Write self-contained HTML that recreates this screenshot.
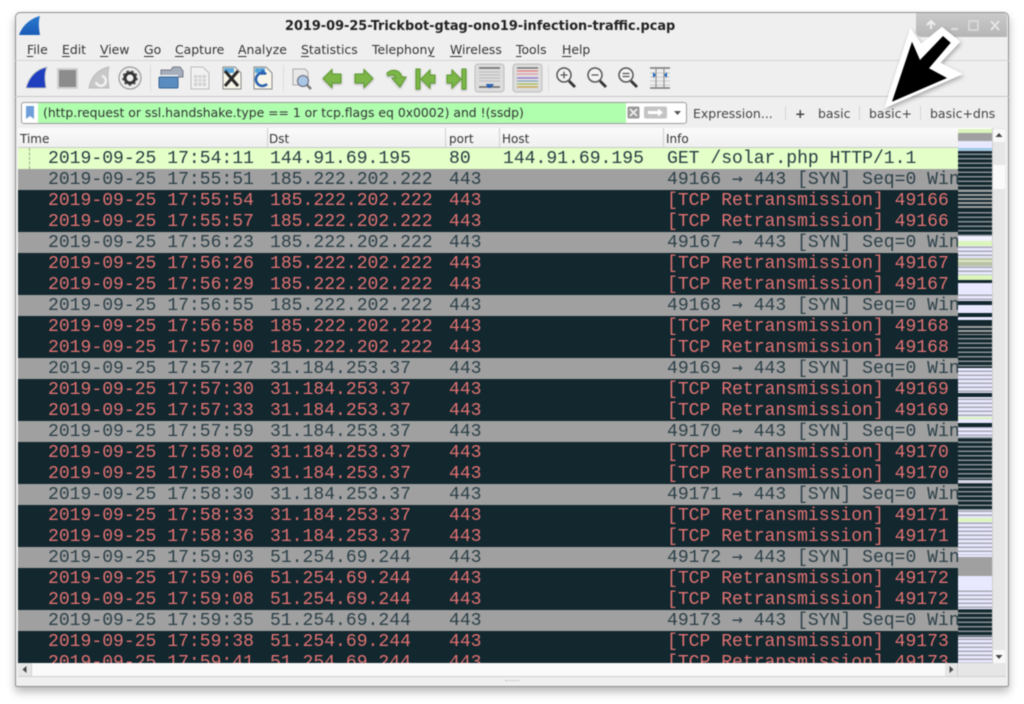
<!DOCTYPE html>
<html><head><meta charset="utf-8"><title>Wireshark</title>
<style>
html,body{margin:0;padding:0;background:#fff;}
body{width:1024px;height:704px;overflow:hidden;position:relative;font-family:"DejaVu Sans","Liberation Sans",sans-serif;}
#wrap{position:absolute;left:0;top:0;width:1024px;height:704px;filter:blur(.45px);}
#win{position:absolute;left:15px;top:12px;width:992px;height:673px;background:#efefef;border:1px solid #8f8f8f;border-radius:5px 5px 2px 2px;box-shadow:0 5px 9px rgba(0,0,0,.28);}
.a{position:absolute;white-space:pre;}
.menu{font-size:12.4px;color:#333;top:42px;line-height:16px;}
.menu u{text-decoration-thickness:1px;text-underline-offset:2px;}
.hl{position:absolute;left:15px;width:994px;height:1px;background:#d4d4d4;}
.hd{position:absolute;top:131px;font-size:12px;color:#333;line-height:16px;}
.sep{position:absolute;top:128px;width:1px;height:20px;background:#cfcfcf;}
#rows{position:absolute;left:18px;top:148px;width:940px;height:515px;overflow:hidden;font-family:"Liberation Mono","DejaVu Sans Mono",monospace;font-size:18.07px;}
.r{position:relative;height:21px;line-height:21px;white-space:pre;}
.r span{position:absolute;top:1px;}
.r b{font-family:"DejaVu Sans Mono",monospace;font-weight:normal;font-size:17.98px;line-height:10px;}
.s1{left:30px}.s2{left:252px}.s3{left:431px}.s4{left:485px}.s5{left:649px}
.d{background:#12272e;color:#e27272;}
.g{background:#a0a0a0;color:#2c4048;}
.l{background:#e4ffc7;color:#263c44;}
.fb{font-size:12.5px;color:#444;top:106px;line-height:16px;}
</style></head><body>
<div id="wrap">
<div id="win"></div>
<div class="a" style="left:916px;top:13px;width:91px;height:24px;background:linear-gradient(#cacaca,#b6b6b6);border-radius:0 4px 0 6px;"></div>

<svg class="a" style="left:916px;top:13px" width="91" height="24">
<path d="M11 12l4-4 4 4M15 9v7" stroke="#eee" stroke-width="2" fill="none"/>
<rect x="35" y="15" width="7" height="2" fill="#ddd"/>
<rect x="53" y="8" width="9" height="9" fill="none" stroke="#dcdcdc" stroke-width="1.6"/>
<path d="M75 8l8 9M83 8l-8 9" stroke="#e6e6e6" stroke-width="2"/>
</svg>

<svg class="a" style="left:19px;top:15px" width="22" height="22"><defs><linearGradient id="fin" x1="0" y1="0" x2="0" y2="1"><stop offset="0" stop-color="#2a78cc"/><stop offset="1" stop-color="#1a5cb8"/></linearGradient></defs><path d="M21 1C13 3 4 9 0 20h21c-1-6-2-13 0-19z" fill="url(#fin)"/></svg>
<div class="a" style="left:285px;top:19px;font-weight:bold;font-size:12.87px;line-height:16px;color:#222;">2019-09-25-Trickbot-gtag-ono19-infection-traffic.pcap</div>

<div class="a menu" style="left:27px"><u>F</u>ile</div>
<div class="a menu" style="left:62px"><u>E</u>dit</div>
<div class="a menu" style="left:100px"><u>V</u>iew</div>
<div class="a menu" style="left:144px"><u>G</u>o</div>
<div class="a menu" style="left:175px"><u>C</u>apture</div>
<div class="a menu" style="left:238px"><u>A</u>nalyze</div>
<div class="a menu" style="left:301px"><u>S</u>tatistics</div>
<div class="a menu" style="left:372px">Telephon<u>y</u></div>
<div class="a menu" style="left:450px"><u>W</u>ireless</div>
<div class="a menu" style="left:516px"><u>T</u>ools</div>
<div class="a menu" style="left:562px"><u>H</u>elp</div>

<div class="hl" style="top:60px"></div>
<div class="hl" style="top:96px;background:#c8c8c8"></div>

<svg class="a" style="left:0;top:60px" width="700" height="36">
<path d="M47 7C37 9 29 16 26 28h20c-1-7-2-14 1-21z" fill="#1f3fbe" stroke="#c4c4c4" stroke-width="1"/>
<rect x="58" y="9" width="19" height="19" fill="#8c8c8c" stroke="#d0d0d0" stroke-width="2"/>
<path d="M109 7c-10 2-18 9-20 21h20c-1-7-2-14 0-21z" fill="#c8c8c8" stroke="#bbb"/>
<path d="M96 22a5 5 0 1 0 6-6" stroke="#f2f2f2" stroke-width="2.500" fill="none"/>
<circle cx="130" cy="18" r="11" fill="#eee" stroke="#999" stroke-width="1.200"/>
<circle cx="130" cy="18" r="5" fill="none" stroke="#333" stroke-width="3"/>
<circle cx="130" cy="18" r="7.200" fill="none" stroke="#444" stroke-width="1.200" stroke-dasharray="2.500 2.500"/>
<rect x="150" y="5" width="1" height="26" fill="#ddd"/>
<path d="M161 10h10l2-3h7l3 4v6h-22z" fill="#a4afbb" stroke="#778"/>
<rect x="160" y="15" width="18" height="2" fill="#f4f4f4"/>
<rect x="159" y="17" width="19" height="11" rx="1" fill="#5a8cc0" stroke="#35628f"/>
<path d="M191 7h12l6 6v16h-18z" fill="#f1f1f1" stroke="#bcbcbc"/>
<path d="M194 15h12v11h-12z" fill="#d2d2d2"/>
<path d="M194 18.500h12M194 22h12M198 15v11M202 15v11" stroke="#f1f1f1"/>
<path d="M223 7h12l6 6v16h-18z" fill="#f8f6e8" stroke="#888"/>
<path d="M224 8h10v5h-10z" fill="#58a6dc"/>
<path d="M225 11l13 15M238 11l-13 15" stroke="#2a2a2a" stroke-width="3"/>
<path d="M254 7h12l6 6v16h-18z" fill="#f8f6e8" stroke="#888"/>
<path d="M255 8h10v5h-10z" fill="#58a6dc"/>
<path d="M267 24a6.500 6.500 0 1 1-1-10" stroke="#2b62b0" stroke-width="2.600" fill="none"/>
<path d="M262 9l5 5-6 1z" fill="#2b62b0"/>
<rect x="283" y="5" width="1" height="26" fill="#ddd"/>
<path d="M293 9h12l3 3v13h-15z" fill="#e8e8e8" stroke="#aaa"/>
<circle cx="303" cy="21" r="5.500" fill="#a9c6e6" stroke="#667"/>
<path d="M307 25l4 4" stroke="#777" stroke-width="2.400"/>

<g fill="#7cb648" stroke="#5e9a30" stroke-width="1" style="filter:drop-shadow(0 1.500px 1px rgba(0,0,0,.3))">
<path d="M323 18.500l9-9v4.500h9v9h-9v4.500z"/>
<path d="M373 18.500l-9-9v4.500h-9v9h9v4.500z"/>
<path d="M387 13c6-5 13-3 15 4h4l-6 10-8-9h4c-1-3-5-4-8-2z"/>
<path d="M416 9h4v20h-4zM421 19l9-9v5h5v8h-5v5z"/>
<path d="M466 9h-4v20h4zM461 19l-9-9v5h-5v8h5v5z"/>
</g>
<rect x="475" y="4" width="29" height="28" rx="3" fill="#dcdcdc" stroke="#bdbdbd"/>
<path d="M479 8h21" stroke="#666" stroke-width="1.400"/>
<path d="M479 12h21M479 15h21M479 18h21M479 21h21" stroke="#bbb"/>
<path d="M479 27h21" stroke="#666" stroke-width="1.400"/>
<path d="M486 24h8l-2 3h-1v1h-3v-1h-1z" fill="#2b62b0"/>
<rect x="513" y="4" width="29" height="28" rx="3" fill="#dcdcdc" stroke="#bdbdbd"/>
<path d="M517 8h21" stroke="#666" stroke-width="1.200"/>
<path d="M517 11h21" stroke="#e66"/><path d="M517 14h21" stroke="#e89"/><path d="M517 18h21" stroke="#7b5fc8"/><path d="M517 21h21" stroke="#79b"/><path d="M517 24h21" stroke="#9b3"/><path d="M517 27h21" stroke="#ca5" stroke-width="1.400"/>
<rect x="548" y="5" width="1" height="26" fill="#ddd"/>
<g fill="#f4f4f4" stroke="#555" stroke-width="1.500">
<circle cx="564" cy="15" r="7"/><circle cx="595" cy="15" r="7"/><circle cx="626" cy="15" r="7"/>
</g>
<path d="M569 21l6 6M600 21l6 6M631 21l6 6" stroke="#333" stroke-width="2.800"/>
<path d="M560.500 15h7M564 11.500v7M591.500 15h7M622.500 13.500h7M622.500 16.500h7" stroke="#555" stroke-width="1.300"/>
<rect x="650" y="7" width="20" height="22" fill="#eee"/>
<path d="M650 8h20M650 28h20" stroke="#777" stroke-width="1.400"/>
<path d="M650 13h20M650 17h20M650 21h20M650 25h20" stroke="#ccc"/>
<path d="M656 7v22M664 7v22" stroke="#888"/>
<path d="M653 12l3 3-3 3zM667 12l-3 3 3 3z" fill="#1e63b8"/>
</svg>

<div class="a" style="left:21px;top:102px;width:664px;height:20px;background:#fff;border:1px solid #9c9c9c;border-radius:3px;"></div>
<div class="a" style="left:38px;top:103px;width:588px;height:20px;background:#afffaf;"></div>
<svg class="a" style="left:22px;top:103px" width="16" height="20"><path d="M4 3h8v13l-4-3-4 3z" fill="#6f9fd8"/></svg>
<div class="a" style="left:43px;top:105px;font-size:12.4px;line-height:16px;color:#333;">(http.request or ssl.handshake.type == 1 or tcp.flags eq 0x0002) and !(ssdp)</div>
<svg class="a" style="left:626px;top:103px" width="60" height="20">
<rect x="1.500" y="3.500" width="12" height="12" rx="1.500" fill="#999"/>
<path d="M4 6l7 7M11 6l-7 7" stroke="#eee" stroke-width="1.800"/>
<rect x="18" y="3.500" width="23" height="12" rx="2" fill="#c4c4c4"/>
<path d="M22 8h10v-2.500l5 4-5 4v-2.500h-10z" fill="#fff"/>
<path d="M48 8h7l-3.500 4z" fill="#555"/>
</svg>
<div class="a fb" style="left:693px">Expression...</div>
<div class="a" style="left:785px;top:106px;width:1px;height:14px;background:#d4d4d4"></div>
<div class="a fb" style="left:795px;font-weight:bold">+</div>
<div class="a fb" style="left:818px">basic</div>
<div class="a" style="left:859px;top:106px;width:1px;height:14px;background:#d4d4d4"></div>
<div class="a fb" style="left:869px">basic+</div>
<div class="a" style="left:920px;top:106px;width:1px;height:14px;background:#d4d4d4"></div>
<div class="a fb" style="left:930px">basic+dns</div>

<div class="a" style="left:18px;top:128px;width:940px;height:20px;background:linear-gradient(#fbfbfb,#f0f0f0);border-bottom:1px solid #c8c8c8;box-sizing:border-box"></div>
<div class="hd" style="left:20px">Time</div><div class="sep" style="left:267px"></div>
<div class="hd" style="left:269px">Dst</div><div class="sep" style="left:445px"></div>
<div class="hd" style="left:449px">port</div><div class="sep" style="left:499px"></div>
<div class="hd" style="left:502px">Host</div><div class="sep" style="left:663px"></div>
<div class="hd" style="left:666px">Info</div>

<div id="rows">
<div class="r l"><i style="position:absolute;left:11px;top:0;height:21px;border-left:1px dashed #9aa88a"></i><span class="s1">2019-09-25 17:54:11</span><span class="s2">144.91.69.195</span><span class="s3">80</span><span class="s4">144.91.69.195</span><span class="s5">GET /solar.php HTTP/1.1</span></div>
<div class="r g"><span class="s1">2019-09-25 17:55:51</span><span class="s2">185.222.202.222</span><span class="s3">443</span><span class="s5">49166 <b>→</b> 443 [SYN] Seq=0 Win</span></div>
<div class="r d"><span class="s1">2019-09-25 17:55:54</span><span class="s2">185.222.202.222</span><span class="s3">443</span><span class="s5">[TCP Retransmission] 49166</span></div>
<div class="r d"><span class="s1">2019-09-25 17:55:57</span><span class="s2">185.222.202.222</span><span class="s3">443</span><span class="s5">[TCP Retransmission] 49166</span></div>
<div class="r g"><span class="s1">2019-09-25 17:56:23</span><span class="s2">185.222.202.222</span><span class="s3">443</span><span class="s5">49167 <b>→</b> 443 [SYN] Seq=0 Win</span></div>
<div class="r d"><span class="s1">2019-09-25 17:56:26</span><span class="s2">185.222.202.222</span><span class="s3">443</span><span class="s5">[TCP Retransmission] 49167</span></div>
<div class="r d"><span class="s1">2019-09-25 17:56:29</span><span class="s2">185.222.202.222</span><span class="s3">443</span><span class="s5">[TCP Retransmission] 49167</span></div>
<div class="r g"><span class="s1">2019-09-25 17:56:55</span><span class="s2">185.222.202.222</span><span class="s3">443</span><span class="s5">49168 <b>→</b> 443 [SYN] Seq=0 Win</span></div>
<div class="r d"><span class="s1">2019-09-25 17:56:58</span><span class="s2">185.222.202.222</span><span class="s3">443</span><span class="s5">[TCP Retransmission] 49168</span></div>
<div class="r d"><span class="s1">2019-09-25 17:57:00</span><span class="s2">185.222.202.222</span><span class="s3">443</span><span class="s5">[TCP Retransmission] 49168</span></div>
<div class="r g"><span class="s1">2019-09-25 17:57:27</span><span class="s2">31.184.253.37</span><span class="s3">443</span><span class="s5">49169 <b>→</b> 443 [SYN] Seq=0 Win</span></div>
<div class="r d"><span class="s1">2019-09-25 17:57:30</span><span class="s2">31.184.253.37</span><span class="s3">443</span><span class="s5">[TCP Retransmission] 49169</span></div>
<div class="r d"><span class="s1">2019-09-25 17:57:33</span><span class="s2">31.184.253.37</span><span class="s3">443</span><span class="s5">[TCP Retransmission] 49169</span></div>
<div class="r g"><span class="s1">2019-09-25 17:57:59</span><span class="s2">31.184.253.37</span><span class="s3">443</span><span class="s5">49170 <b>→</b> 443 [SYN] Seq=0 Win</span></div>
<div class="r d"><span class="s1">2019-09-25 17:58:02</span><span class="s2">31.184.253.37</span><span class="s3">443</span><span class="s5">[TCP Retransmission] 49170</span></div>
<div class="r d"><span class="s1">2019-09-25 17:58:04</span><span class="s2">31.184.253.37</span><span class="s3">443</span><span class="s5">[TCP Retransmission] 49170</span></div>
<div class="r g"><span class="s1">2019-09-25 17:58:30</span><span class="s2">31.184.253.37</span><span class="s3">443</span><span class="s5">49171 <b>→</b> 443 [SYN] Seq=0 Win</span></div>
<div class="r d"><span class="s1">2019-09-25 17:58:33</span><span class="s2">31.184.253.37</span><span class="s3">443</span><span class="s5">[TCP Retransmission] 49171</span></div>
<div class="r d"><span class="s1">2019-09-25 17:58:36</span><span class="s2">31.184.253.37</span><span class="s3">443</span><span class="s5">[TCP Retransmission] 49171</span></div>
<div class="r g"><span class="s1">2019-09-25 17:59:03</span><span class="s2">51.254.69.244</span><span class="s3">443</span><span class="s5">49172 <b>→</b> 443 [SYN] Seq=0 Win</span></div>
<div class="r d"><span class="s1">2019-09-25 17:59:06</span><span class="s2">51.254.69.244</span><span class="s3">443</span><span class="s5">[TCP Retransmission] 49172</span></div>
<div class="r d"><span class="s1">2019-09-25 17:59:08</span><span class="s2">51.254.69.244</span><span class="s3">443</span><span class="s5">[TCP Retransmission] 49172</span></div>
<div class="r g"><span class="s1">2019-09-25 17:59:35</span><span class="s2">51.254.69.244</span><span class="s3">443</span><span class="s5">49173 <b>→</b> 443 [SYN] Seq=0 Win</span></div>
<div class="r d"><span class="s1">2019-09-25 17:59:38</span><span class="s2">51.254.69.244</span><span class="s3">443</span><span class="s5">[TCP Retransmission] 49173</span></div>
<div class="r d"><span class="s1">2019-09-25 17:59:41</span><span class="s2">51.254.69.244</span><span class="s3">443</span><span class="s5">[TCP Retransmission] 49173</span></div>
</div>

<svg class="a" style="left:958px;top:128px" width="34" height="535">
<defs>
<pattern id="ds" width="34" height="4.500" patternUnits="userSpaceOnUse"><rect width="34" height="4.500" fill="#12272e"/><rect y="3" width="34" height="1.500" fill="#8a9296"/></pattern>
<pattern id="dg" width="34" height="4" patternUnits="userSpaceOnUse"><rect width="34" height="4" fill="#12272e"/><rect y="2" width="34" height="2" fill="#a0a0a0"/></pattern>
<pattern id="lv" width="34" height="4" patternUnits="userSpaceOnUse"><rect width="34" height="4" fill="#e8e8ff"/><rect y="2.500" width="34" height="1.500" fill="#a8a8b4"/></pattern>
</defs>
<rect width="34" height="535" fill="#e8e8ff"/>
<rect y="0" width="34" height="1" fill="#fff"/>
<rect y="1" width="34" height="4" fill="#dcf5bc"/>
<rect y="5" width="34" height="8" fill="#a0a0a0"/>
<rect y="13" width="34" height="7" fill="#e8e8ff"/>
<rect y="20" width="34" height="2.500" fill="#9cc8e4"/>
<rect y="23" width="34" height="39" fill="url(#ds)"/>
<rect y="62" width="34" height="20" fill="url(#dg)"/>
<rect y="82" width="34" height="26" fill="url(#ds)"/>
<rect y="108" width="34" height="5" fill="#f0f0ff"/>
<rect y="113" width="34" height="5" fill="#dcf5bc"/>
<rect y="118" width="34" height="12" fill="url(#lv)"/>
<rect y="130" width="34" height="8" fill="#b8c2a4"/>
<rect y="132" width="34" height="2" fill="#dfe6c4"/>
<rect y="138" width="34" height="9" fill="url(#lv)"/>
<rect y="147" width="34" height="5" fill="#dcf5bc"/>
<rect y="152" width="34" height="3" fill="#12272e"/>
<rect y="155" width="34" height="9" fill="#e8e8ff"/>
<rect y="164" width="34" height="9" fill="url(#lv)"/>
<rect y="173" width="34" height="4" fill="#12272e"/>
<rect y="177" width="34" height="6" fill="#e8e8ff"/>
<rect y="185" width="34" height="4" fill="#12272e"/>
<rect y="189" width="34" height="3" fill="#e8e8ff"/>
<rect y="192" width="34" height="5" fill="#12272e"/>
<rect y="197" width="34" height="10" fill="url(#dg)"/>
<rect y="207" width="34" height="33" fill="url(#ds)"/>
<rect y="240" width="34" height="25" fill="url(#lv)"/>
<rect y="265" width="34" height="4" fill="#12272e"/>
<rect y="270" width="34" height="19" fill="url(#lv)"/>
<rect y="289" width="34" height="2" fill="#dcf5bc"/>
<rect y="292" width="34" height="3" fill="#e8e8ff"/>
<rect y="295" width="34" height="4" fill="#12272e"/>
<rect y="299" width="34" height="10" fill="url(#lv)"/>
<rect y="309" width="34" height="43" fill="url(#ds)"/>
<rect y="352" width="34" height="3" fill="#d8d8ea"/>
<rect y="355" width="34" height="27" fill="url(#ds)"/>
<rect y="382" width="34" height="8" fill="url(#lv)"/>
<rect y="390" width="34" height="4" fill="#dcf5bc"/>
<rect y="394" width="34" height="33" fill="url(#lv)"/>
<rect y="429" width="34" height="19" fill="#a0a0a0"/>
<rect y="448" width="34" height="12" fill="#e8e8ff"/>
<rect y="461" width="34" height="19" fill="url(#lv)"/>
<rect y="481" width="34" height="28" fill="url(#ds)"/>
<rect y="509" width="34" height="26" fill="url(#lv)"/>
</svg>

<div class="a" style="left:992px;top:128px;width:13px;height:535px;background:#e6e6e6;border-left:1px solid #cfcfcf;box-sizing:border-box"></div>
<div class="a" style="left:993px;top:129px;width:12px;height:13px;background:#f8f8f8"></div>
<div class="a" style="left:993px;top:165px;width:12px;height:24px;background:#fafafa"></div>
<div class="a" style="left:993px;top:650px;width:12px;height:13px;background:#f8f8f8"></div>
<svg class="a" style="left:993px;top:129px" width="12" height="13"><path d="M2.500 8h7l-3.500-4z" fill="#444"/></svg>
<svg class="a" style="left:993px;top:650px" width="12" height="13"><path d="M2.500 5h7l-3.500 4z" fill="#444"/></svg>

<div class="a" style="left:18px;top:663px;width:988px;height:14px;background:#e6e6e6;border-bottom:1px solid #cfcfcf;box-sizing:border-box"></div>
<div class="a" style="left:31px;top:663px;width:914px;height:13px;background:#fafafa"></div>
<div class="a" style="left:957px;top:663px;width:1px;height:13px;background:#d0d0d0"></div>
<div class="a" style="left:31px;top:663px;width:1px;height:13px;background:#d0d0d0"></div>
<svg class="a" style="left:18px;top:663px" width="13" height="13"><path d="M8.500 3v7l-4-3.500z" fill="#444"/></svg>
<svg class="a" style="left:945px;top:663px" width="13" height="13"><path d="M4.500 3v7l4-3.500z" fill="#444"/></svg>
<div class="a" style="left:505px;top:680px;width:14px;height:1px;border-top:1px dotted #bbb"></div>

<svg class="a" style="left:870px;top:15px" width="110" height="105">
<path d="M40.700 15L51 30 72 13 89 26.700 69 48 90.700 59 15.700 91.700z" fill="#fff" stroke="#fff" stroke-width="2" stroke-linejoin="miter" style="filter:drop-shadow(1px 2px 2px rgba(0,0,0,.3))"/>
<path d="M42 26.700L50 45 73 21 80.700 27.700 59 53.300 77 63 22 86.700z" fill="#000"/>
</svg>
</div>
</body></html>
